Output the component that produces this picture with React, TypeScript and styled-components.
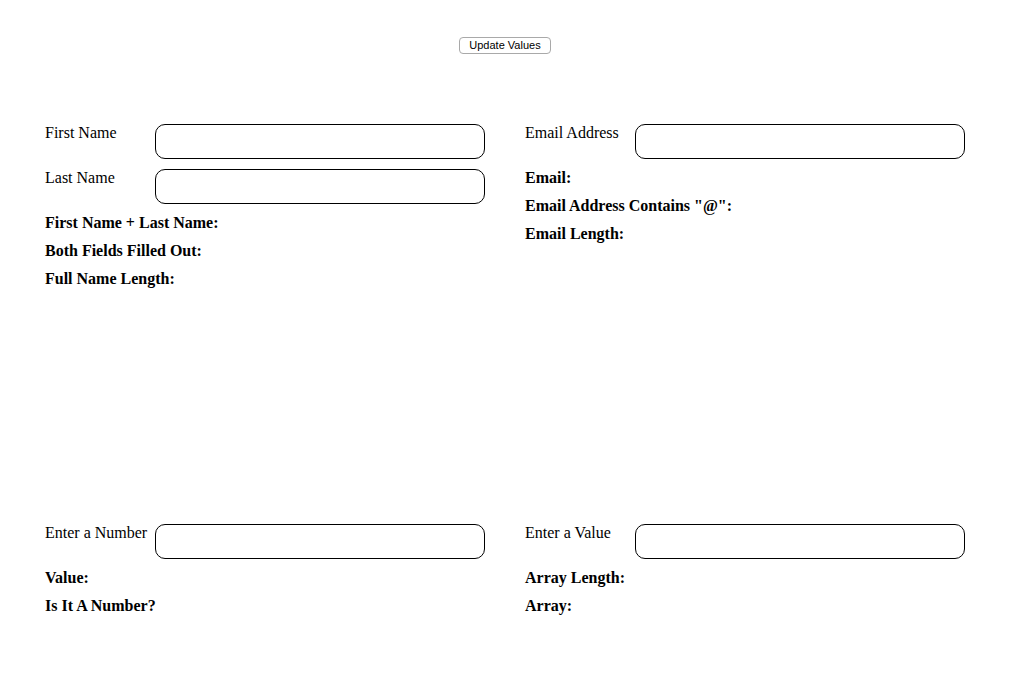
import styled, { createGlobalStyle } from "styled-components";

const GlobalStyle = createGlobalStyle`
  html, body {
    margin: 0;
    padding: 0;
    background: #fff;
  }
  body {
    font-family: "Liberation Serif", "Times New Roman", serif;
    font-size: 16px;
    color: #000;
  }
`;

const Page = styled.div`
  padding-top: 37px;
  width: 1033px;
`;

const Toolbar = styled.div`
  display: flex;
  justify-content: center;
  padding-right: 23px;
`;

const UpdateButton = styled.button`
  height: 17px;
  padding: 0 9px;
  font-family: "Liberation Sans", Arial, sans-serif;
  font-size: 11px;
  line-height: 15px;
  color: #000;
  background: #fff;
  border: 1px solid #a9a9a9;
  border-radius: 4px;
`;

const SectionGrid = styled.div`
  display: grid;
  grid-template-columns: 480px 480px;
  grid-template-rows: 400px auto;
  margin-top: 70px;
  padding-left: 45px;
`;

const Section = styled.section`
  display: flex;
  flex-direction: column;
`;

const FieldRow = styled.div`
  display: flex;
  align-items: flex-start;
  margin-bottom: 10px;
`;

const FieldLabel = styled.label`
  width: 110px;
  line-height: 18px;
`;

const TextInput = styled.input`
  box-sizing: border-box;
  width: 330px;
  height: 35px;
  border: 1px solid #000;
  border-radius: 10px;
  background: #fff;
  outline: none;
`;

const Result = styled.p`
  margin: 0 0 10px;
  font-weight: bold;
  line-height: 18px;
`;

type Field = { label: string };

const Block = ({ fields, results }: { fields: Field[]; results: string[] }) => (
  <Section>
    {fields.map((f) => (
      <FieldRow key={f.label}>
        <FieldLabel>{f.label}</FieldLabel>
        <TextInput type="text" />
      </FieldRow>
    ))}
    {results.map((r) => (
      <Result key={r}>{r}</Result>
    ))}
  </Section>
);

export default function App() {
  return (
    <Page>
      <GlobalStyle />
      <Toolbar>
        <UpdateButton>Update Values</UpdateButton>
      </Toolbar>
      <SectionGrid>
        <Block
          fields={[{ label: "First Name" }, { label: "Last Name" }]}
          results={["First Name + Last Name:", "Both Fields Filled Out:", "Full Name Length:"]}
        />
        <Block
          fields={[{ label: "Email Address" }]}
          results={["Email:", 'Email Address Contains "@":', "Email Length:"]}
        />
        <Block fields={[{ label: "Enter a Number" }]} results={["Value:", "Is It A Number?"]} />
        <Block fields={[{ label: "Enter a Value" }]} results={["Array Length:", "Array:"]} />
      </SectionGrid>
    </Page>
  );
}
